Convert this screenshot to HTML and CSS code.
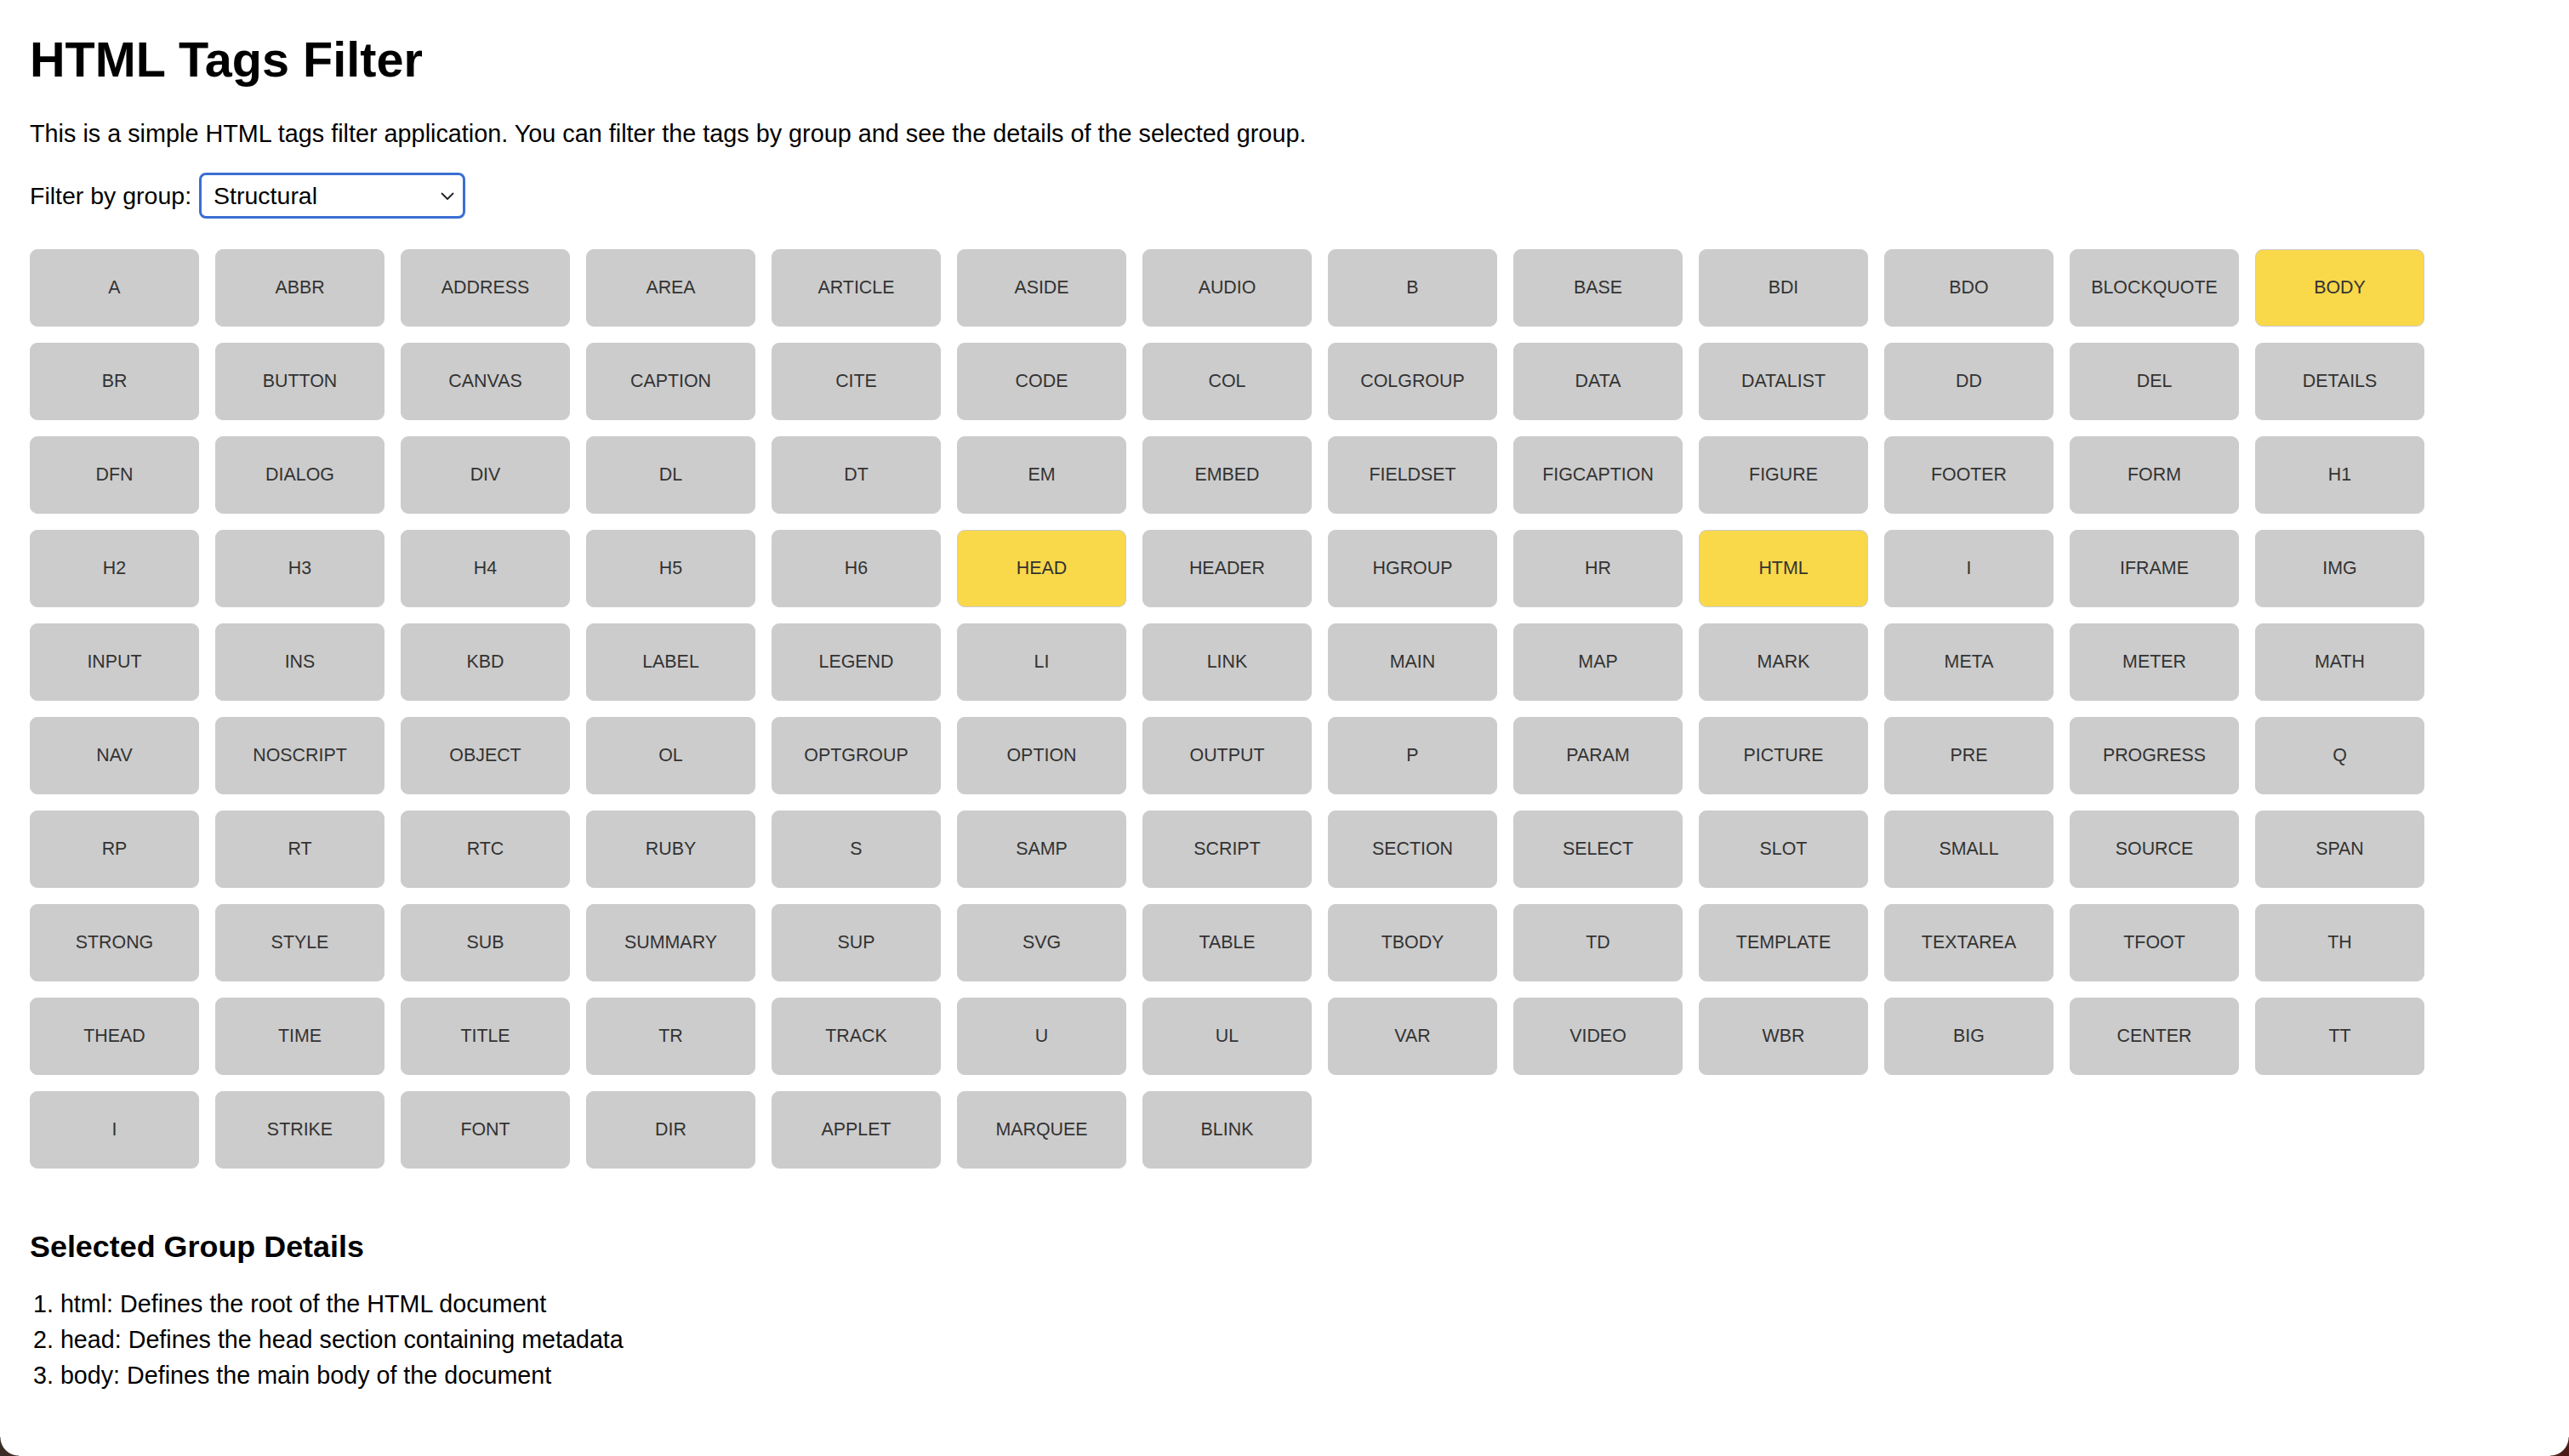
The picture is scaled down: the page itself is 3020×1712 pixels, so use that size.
FILE: index.html
```html
<!DOCTYPE html>
<html lang="en">
<head>
<meta charset="utf-8">
<title>HTML Tags Filter</title>
<link rel="stylesheet" href="styles.css">
</head>
<body>
<h1 class="title">HTML Tags Filter</h1>
<p class="intro">This is a simple HTML tags filter application. You can filter the tags by group and see the details of the selected group.</p>
<div class="filter">
  <label class="filter-label" for="group">Filter by group:</label>
  <span class="select-wrap">
    <select id="group" class="select">
      <option>Structural</option>
    </select>
    <svg class="chevron" width="16" height="10" viewBox="0 0 16 10"><path d="M1.5 1.5 L8 8 L14.5 1.5" fill="none" stroke="#222" stroke-width="1.8" stroke-linecap="round" stroke-linejoin="round"/></svg>
  </span>
</div>
<div class="grid">
  <div class="tag">A</div><div class="tag">ABBR</div><div class="tag">ADDRESS</div><div class="tag">AREA</div><div class="tag">ARTICLE</div><div class="tag">ASIDE</div><div class="tag">AUDIO</div><div class="tag">B</div><div class="tag">BASE</div><div class="tag">BDI</div><div class="tag">BDO</div><div class="tag">BLOCKQUOTE</div><div class="tag on">BODY</div>
  <div class="tag">BR</div><div class="tag">BUTTON</div><div class="tag">CANVAS</div><div class="tag">CAPTION</div><div class="tag">CITE</div><div class="tag">CODE</div><div class="tag">COL</div><div class="tag">COLGROUP</div><div class="tag">DATA</div><div class="tag">DATALIST</div><div class="tag">DD</div><div class="tag">DEL</div><div class="tag">DETAILS</div>
  <div class="tag">DFN</div><div class="tag">DIALOG</div><div class="tag">DIV</div><div class="tag">DL</div><div class="tag">DT</div><div class="tag">EM</div><div class="tag">EMBED</div><div class="tag">FIELDSET</div><div class="tag">FIGCAPTION</div><div class="tag">FIGURE</div><div class="tag">FOOTER</div><div class="tag">FORM</div><div class="tag">H1</div>
  <div class="tag">H2</div><div class="tag">H3</div><div class="tag">H4</div><div class="tag">H5</div><div class="tag">H6</div><div class="tag on">HEAD</div><div class="tag">HEADER</div><div class="tag">HGROUP</div><div class="tag">HR</div><div class="tag on">HTML</div><div class="tag">I</div><div class="tag">IFRAME</div><div class="tag">IMG</div>
  <div class="tag">INPUT</div><div class="tag">INS</div><div class="tag">KBD</div><div class="tag">LABEL</div><div class="tag">LEGEND</div><div class="tag">LI</div><div class="tag">LINK</div><div class="tag">MAIN</div><div class="tag">MAP</div><div class="tag">MARK</div><div class="tag">META</div><div class="tag">METER</div><div class="tag">MATH</div>
  <div class="tag">NAV</div><div class="tag">NOSCRIPT</div><div class="tag">OBJECT</div><div class="tag">OL</div><div class="tag">OPTGROUP</div><div class="tag">OPTION</div><div class="tag">OUTPUT</div><div class="tag">P</div><div class="tag">PARAM</div><div class="tag">PICTURE</div><div class="tag">PRE</div><div class="tag">PROGRESS</div><div class="tag">Q</div>
  <div class="tag">RP</div><div class="tag">RT</div><div class="tag">RTC</div><div class="tag">RUBY</div><div class="tag">S</div><div class="tag">SAMP</div><div class="tag">SCRIPT</div><div class="tag">SECTION</div><div class="tag">SELECT</div><div class="tag">SLOT</div><div class="tag">SMALL</div><div class="tag">SOURCE</div><div class="tag">SPAN</div>
  <div class="tag">STRONG</div><div class="tag">STYLE</div><div class="tag">SUB</div><div class="tag">SUMMARY</div><div class="tag">SUP</div><div class="tag">SVG</div><div class="tag">TABLE</div><div class="tag">TBODY</div><div class="tag">TD</div><div class="tag">TEMPLATE</div><div class="tag">TEXTAREA</div><div class="tag">TFOOT</div><div class="tag">TH</div>
  <div class="tag">THEAD</div><div class="tag">TIME</div><div class="tag">TITLE</div><div class="tag">TR</div><div class="tag">TRACK</div><div class="tag">U</div><div class="tag">UL</div><div class="tag">VAR</div><div class="tag">VIDEO</div><div class="tag">WBR</div><div class="tag">BIG</div><div class="tag">CENTER</div><div class="tag">TT</div>
  <div class="tag">I</div><div class="tag">STRIKE</div><div class="tag">FONT</div><div class="tag">DIR</div><div class="tag">APPLET</div><div class="tag">MARQUEE</div><div class="tag">BLINK</div>
</div>
<h2 class="details-title">Selected Group Details</h2>
<ol class="details">
  <li>html: Defines the root of the HTML document</li>
  <li>head: Defines the head section containing metadata</li>
  <li>body: Defines the main body of the document</li>
</ol>
<div class="corner corner-left"></div>
<div class="corner corner-right"></div>
</body>
</html>
```
FILE: styles.css
```css
html, body {
  background: #ffffff;
}
body {
  margin: 0;
  padding: 38px 35px 34px;
  font-family: "Liberation Sans", Arial, Helvetica, sans-serif;
  color: #000;
}
.title {
  font-size: 57.6px;
  line-height: 65px;
  font-weight: bold;
  margin: 0 0 38px;
}
.intro {
  font-size: 28.8px;
  line-height: 33px;
  margin: 0 0 29px;
}
.filter {
  display: flex;
  align-items: center;
  gap: 9px;
  font-size: 28.5px;
  margin-bottom: 36px;
}
.select-wrap {
  position: relative;
  display: block;
  width: 313px;
  height: 54px;
}
.select {
  -webkit-appearance: none;
  appearance: none;
  box-sizing: border-box;
  width: 100%;
  height: 100%;
  border: 3px solid #3a6fd2;
  border-radius: 8px;
  background: #fff;
  color: #000;
  font-family: "Liberation Sans", Arial, sans-serif;
  font-size: 28.5px;
  padding: 0 0 0 14px;
  outline: none;
}
.chevron {
  position: absolute;
  right: 13px;
  top: 23px;
}
.grid {
  display: flex;
  flex-wrap: wrap;
  gap: 19px;
}
.tag {
  box-sizing: border-box;
  width: 199px;
  height: 91px;
  background: #cccccc;
  border: 1px solid #cccccc;
  border-radius: 9px;
  display: flex;
  align-items: center;
  justify-content: center;
  font-size: 21.4px;
  color: #333;
}
.tag.on {
  background: #f9d84a;
}
.details-title {
  font-size: 35.9px;
  line-height: 41px;
  margin: 72px 0 25px;
}
.details {
  font-size: 28.7px;
  line-height: 42px;
  margin: 0;
  padding: 0 0 0 4px;
  list-style-position: inside;
}
.corner {
  position: fixed;
  bottom: 0;
  width: 22px;
  height: 22px;
}
.corner-left {
  left: 0;
  background: radial-gradient(circle at 100% 0, rgba(0,0,0,0) 21px, #3b2e26 22px);
}
.corner-right {
  right: 0;
  background: radial-gradient(circle at 0 0, rgba(0,0,0,0) 21px, #4a1e16 22px);
}
```
